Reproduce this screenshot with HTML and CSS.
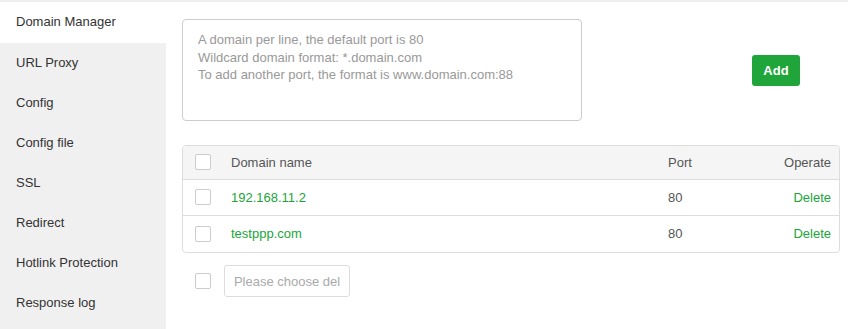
FILE: index.html
```html
<!DOCTYPE html>
<html lang="en">
<head>
  <meta charset="UTF-8" />
  <title>Site - Domain Manager</title>
  <link rel="stylesheet" href="styles.css">
</head>
<body>
  <div class="page">
    <ul class="menu">
      <li class="active">Domain Manager</li>
      <li>URL Proxy</li>
      <li>Config</li>
      <li>Config file</li>
      <li>SSL</li>
      <li>Redirect</li>
      <li>Hotlink Protection</li>
      <li>Response log</li>
    </ul>

    <div class="content">
      <div class="add-row">
        <textarea class="domains" placeholder="A domain per line, the default port is 80&#10;Wildcard domain format: *.domain.com&#10;To add another port, the format is www.domain.com:88"></textarea>
        <button class="add-btn">Add</button>
      </div>

      <div class="table-box">
        <table>
          <thead>
            <tr>
              <th class="col-check"><span class="check"></span></th>
              <th>Domain name</th>
              <th class="col-port">Port</th>
              <th class="col-op">Operate</th>
            </tr>
          </thead>
          <tbody>
            <tr>
              <td class="col-check"><span class="check"></span></td>
              <td><a class="link">192.168.11.2</a></td>
              <td class="col-port">80</td>
              <td class="col-op"><a class="link">Delete</a></td>
            </tr>
            <tr>
              <td class="col-check"><span class="check"></span></td>
              <td><a class="link">testppp.com</a></td>
              <td class="col-port">80</td>
              <td class="col-op"><a class="link">Delete</a></td>
            </tr>
          </tbody>
        </table>
      </div>

      <div class="batch">
        <span class="check"></span>
        <button class="batch-btn" disabled>Please choose del</button>
      </div>
    </div>
  </div>
</body>
</html>
```

FILE: styles.css
```css
* {
  margin: 0;
  padding: 0;
  box-sizing: border-box;
}

body {
  font-family: "Liberation Sans", Arial, sans-serif;
  font-size: 13px;
  color: #333;
  background: #fff;
  border-top: 2px solid #efefef;
}

.page {
  display: flex;
  height: 327px;
}

.menu {
  list-style: none;
  width: 166px;
  background: #f0f0f0;
  flex-shrink: 0;
}

.menu li {
  height: 40px;
  line-height: 40px;
  padding-left: 16px;
  color: #333;
  cursor: pointer;
}

.menu li.active {
  background: #fff;
  height: 41px;
}

.content {
  flex: 1;
  padding: 17px 8px 0 16px;
}

.add-row {
  display: flex;
  align-items: center;
}

.domains {
  width: 400px;
  height: 102px;
  border: 1px solid #ccc;
  border-radius: 4px;
  padding: 11px 15px;
  font-family: inherit;
  font-size: 13px;
  line-height: 17.5px;
  resize: none;
  outline: none;
}

.domains::placeholder {
  color: #999;
}

.add-btn {
  margin-left: 170px;
  width: 48px;
  height: 31px;
  background: #20a53a;
  color: #fff;
  border: none;
  border-radius: 3px;
  font-family: inherit;
  font-size: 13px;
  font-weight: bold;
  cursor: pointer;
}

.table-box {
  margin-top: 24px;
  border: 1px solid #ddd;
  border-radius: 4px;
  overflow: hidden;
}

table {
  width: 100%;
  border-collapse: collapse;
}

th {
  background: #f5f5f5;
  font-weight: normal;
  color: #555;
  text-align: left;
  height: 33px;
  border-bottom: 1px solid #ddd;
}

td {
  height: 36px;
  border-bottom: 1px solid #ddd;
  color: #555;
}

tbody tr:last-child td {
  height: 37px;
  border-bottom: none;
}

.col-check {
  width: 48px;
  padding-left: 12px;
}

.col-port {
  width: 91px;
}

.col-op {
  width: 80px;
  text-align: right;
  padding-right: 8px;
}

.check {
  display: block;
  width: 16px;
  height: 16px;
  border: 1px solid #ccc;
  border-radius: 2px;
  background: #fff;
}

.link {
  color: #20a53a;
  cursor: pointer;
}

.batch {
  display: flex;
  align-items: center;
  margin-top: 12px;
  padding-left: 13px;
}

.batch-btn {
  margin-left: 13px;
  width: 126px;
  height: 32px;
  border: 1px solid #ddd;
  border-radius: 3px;
  background: #fff;
  color: #aaa;
  font-family: inherit;
  font-size: 13px;
}
```
